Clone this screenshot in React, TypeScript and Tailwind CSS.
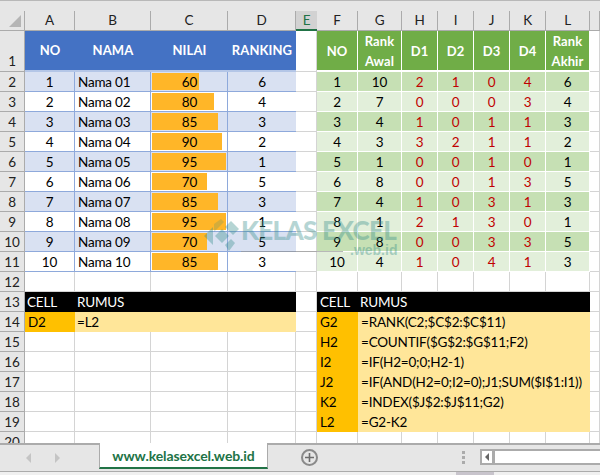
const columns = ['A', 'B', 'C', 'D', 'E', 'F', 'G', 'H', 'I', 'J', 'K', 'L', '']

const students = [
  { no: 1, name: 'Nama 01', score: 60, rank: 6 },
  { no: 2, name: 'Nama 02', score: 80, rank: 4 },
  { no: 3, name: 'Nama 03', score: 85, rank: 3 },
  { no: 4, name: 'Nama 04', score: 90, rank: 2 },
  { no: 5, name: 'Nama 05', score: 95, rank: 1 },
  { no: 6, name: 'Nama 06', score: 70, rank: 5 },
  { no: 7, name: 'Nama 07', score: 85, rank: 3 },
  { no: 8, name: 'Nama 08', score: 95, rank: 1 },
  { no: 9, name: 'Nama 09', score: 70, rank: 5 },
  { no: 10, name: 'Nama 10', score: 85, rank: 3 },
]

const ranks = [
  [1, 10, 2, 1, 0, 4, 6],
  [2, 7, 0, 0, 0, 3, 4],
  [3, 4, 1, 0, 1, 1, 3],
  [4, 3, 3, 2, 1, 1, 2],
  [5, 1, 0, 0, 1, 0, 1],
  [6, 8, 0, 0, 1, 3, 5],
  [7, 4, 1, 0, 3, 1, 3],
  [8, 1, 2, 1, 3, 0, 1],
  [9, 8, 0, 0, 3, 3, 5],
  [10, 4, 1, 0, 4, 1, 3],
]

const formulas = [
  ['G2', '=RANK(C2;$C$2:$C$11)'],
  ['H2', '=COUNTIF($G$2:$G$11;F2)'],
  ['I2', '=IF(H2=0;0;H2-1)'],
  ['J2', '=IF(AND(H2=0;I2=0);J1;SUM($I$1:I1))'],
  ['K2', '=INDEX($J$2:$J$11;G2)'],
  ['L2', '=G2-K2'],
]

const gridLine = 'border-r border-b border-[#d4d4d4]'
const blueLine = 'border-r border-b border-[#8ea9db] pt-[1px]'
const whiteLine = 'border-r border-b border-white pt-[1px]'

function RowHead({ n, className = '' }: { n: number; className?: string }) {
  return (
    <div className={`flex justify-center items-center pt-[1px] bg-[#e6e6e6] border-r border-b border-[#ababab] text-[#222] ${className}`}>
      {n}
    </div>
  )
}

function Blank({ span = 1 }: { span?: number }) {
  return (
    <>
      {Array.from({ length: span }).map((_, i) => (
        <div key={i} className={gridLine}></div>
      ))}
    </>
  )
}

function BlueHead({ children }: { children: string }) {
  return (
    <div className="flex items-center justify-center bg-[#4472c4] border-b-2 border-[#b4c6e7] font-bold text-white text-[13px] tracking-[0.1px]">
      {children}
    </div>
  )
}

function GreenHead({ children }: { children: string }) {
  return (
    <div className="flex items-center justify-center text-center leading-[20px] bg-[#70ad47] border-r border-white border-b-2 font-bold text-white text-[13px] tracking-[0.1px]">
      {children}
    </div>
  )
}

export default function App() {
  return (
    <div className="relative w-[600px] h-[475px] overflow-hidden bg-white text-[13.5px] tracking-[-0.2px] text-black font-['Lato','Open_Sans',sans-serif]">
      {/* Ribbon edge */}
      <div className="h-[11px] bg-[#e6e6e6] border-t border-[#b8b8b8]"></div>

      {/* Sheet */}
      <div className="h-[432px] overflow-hidden grid grid-cols-[25px_50px_76px_77px_68px_21px_41px_44px_36px_36px_36px_36px_44px_10px] grid-rows-[20px_41px_repeat(19,20px)]">
        {/* Column letters */}
        <div className="flex items-end justify-end bg-[#e6e6e6] border-r border-b border-[#ababab] pr-[3px] pb-[3px]">
          <div className="w-0 h-0 border-l-[12px] border-l-transparent border-b-[12px] border-b-[#b5b5b5]"></div>
        </div>
        {columns.map((c) =>
          c === 'E' ? (
            <div key={c} className="flex items-center justify-center bg-[#d2d2d2] border-b-2 border-[#217346] text-[#217346]">
              {c}
            </div>
          ) : (
            <div key={c} className="flex items-center justify-center bg-[#e6e6e6] border-r border-b border-[#ababab] text-[#222]">
              {c}
            </div>
          ),
        )}

        {/* Row 1 */}
        <RowHead n={1} className="!items-end" />
        <BlueHead>NO</BlueHead>
        <BlueHead>NAMA</BlueHead>
        <BlueHead>NILAI</BlueHead>
        <BlueHead>RANKING</BlueHead>
        <Blank />
        <GreenHead>NO</GreenHead>
        <GreenHead>Rank Awal</GreenHead>
        <GreenHead>D1</GreenHead>
        <GreenHead>D2</GreenHead>
        <GreenHead>D3</GreenHead>
        <GreenHead>D4</GreenHead>
        <GreenHead>Rank Akhir</GreenHead>
        <Blank />

        {/* Rows 2-11 */}
        {students.map((s, i) => {
          const band = i % 2 === 0
          const blueBg = band ? 'bg-[#d9e1f2]' : 'bg-white'
          const greenBg = band ? 'bg-[#c6e0b4]' : 'bg-[#e2efda]'
          return (
            <div key={s.no} className="contents">
              <RowHead n={i + 2} />
              <div className={`flex items-center justify-center ${blueBg} ${blueLine}`}>{s.no}</div>
              <div className={`flex items-center pl-[3px] ${blueBg} ${blueLine}`}>{s.name}</div>
              <div className={`grid py-[1px] pl-[1px] ${blueBg} border-r border-b border-[#8ea9db]`}>
                <div className="[grid-area:1/1] h-[17px] bg-[#ffb628]" style={{ width: Math.round(s.score * 0.78) }}></div>
                <div className="[grid-area:1/1] flex items-center justify-center h-[17px] pt-[1px]">{s.score}</div>
              </div>
              <div className={`flex items-center justify-center pt-[1px] ${blueBg} border-b border-[#8ea9db]`}>{s.rank}</div>
              <Blank />
              {ranks[i].map((v, j) => (
                <div
                  key={j}
                  className={`flex items-center justify-center ${greenBg} ${whiteLine} ${j >= 2 && j <= 5 ? 'text-[#c00000]' : ''}`}
                >
                  {v}
                </div>
              ))}
              <Blank />
            </div>
          )
        })}

        {/* Row 12 */}
        <RowHead n={12} />
        <Blank span={13} />

        {/* Row 13 */}
        <RowHead n={13} />
        <div className="flex items-center pl-[2px] pt-[1px] bg-black text-white">CELL</div>
        <div className="col-span-3 flex items-center pl-[2px] pt-[1px] bg-black text-white">RUMUS</div>
        <Blank />
        <div className="flex items-center pl-[3px] pt-[1px] bg-black text-white">CELL</div>
        <div className="col-span-6 flex items-center pl-[2px] pt-[1px] bg-black text-white">RUMUS</div>
        <Blank />

        {/* Row 14-19 */}
        {formulas.map(([cell, formula], i) => (
          <div key={cell} className="contents">
            <RowHead n={14 + i} />
            {i === 0 ? (
              <>
                <div className="flex items-center pl-[3px] pt-[1px] bg-[#ffc000]">D2</div>
                <div className="col-span-3 flex items-center pl-[2px] pt-[1px] bg-[#ffe699]">=L2</div>
              </>
            ) : (
              <Blank span={4} />
            )}
            <Blank />
            <div className="flex items-center pl-[3px] pt-[1px] bg-[#ffc000]">{cell}</div>
            <div className="col-span-6 flex items-center pl-[3px] pt-[1px] bg-[#ffe699] whitespace-nowrap">{formula}</div>
            <Blank />
          </div>
        ))}

        {/* Row 20 */}
        <RowHead n={20} />
        <Blank span={13} />
      </div>

      {/* Sheet tabs */}
      <div className="h-[28px] flex items-stretch bg-[#e6e6e6] border-t-2 border-[#ababab]">
        <div className="w-[99px] flex items-center">
          <div className="ml-[26px] w-0 h-0 border-y-[5px] border-y-transparent border-r-[5px] border-r-[#c4c4c4]"></div>
          <div className="ml-[24px] w-0 h-0 border-y-[5px] border-y-transparent border-l-[5px] border-l-[#c4c4c4]"></div>
        </div>
        <div className="w-[169px] -mt-[2px] mb-[2px] flex items-center justify-center bg-white border-x border-[#ababab] border-b-[2px] border-b-[#217346] font-bold text-[14px] tracking-[-0.1px] text-[#217346]">
          www.kelasexcel.web.id
        </div>
        <div className="ml-[33px] self-center mb-[2px] w-[17px] h-[17px] rounded-full border-2 border-[#8a8a8a] flex items-center justify-center text-[#6e6e6e]">
          <svg width="9" height="9" viewBox="0 0 9 9">
            <path d="M4.5 0v9M0 4.5h9" stroke="currentColor" strokeWidth="1.6" />
          </svg>
        </div>
        <div className="ml-[144px] self-center mb-[2px] flex flex-col gap-[2px]">
          <div className="w-[3px] h-[3px] bg-[#ababab]"></div>
          <div className="w-[3px] h-[3px] bg-[#ababab]"></div>
          <div className="w-[3px] h-[3px] bg-[#ababab]"></div>
        </div>
        <div className="ml-[15px] self-center mb-[2px] flex-1 h-[16px] flex items-center bg-white border-y-2 border-l-2 border-[#ababab]">
          <div className="w-[13px] h-full flex items-center justify-center border-r-[3px] border-[#ababab]">
            <div className="w-0 h-0 border-y-[4px] border-y-transparent border-r-[4px] border-r-[#666]"></div>
          </div>
        </div>
      </div>

      {/* Status bar edge */}
      <div className="h-[4px] bg-[#f0f0f0] border-t border-[#ababab] pl-[456px]">
        <div className="w-[38px] h-[3px] bg-[#c8c4cc]"></div>
      </div>

      {/* Watermark floats over the sheet */}
      <div className="absolute left-[204px] top-[218px] w-[200px] h-[40px] pointer-events-none opacity-35 text-[#2f8a86]">
        <svg className="absolute left-0 top-[1px]" width="36" height="34" viewBox="0 0 36 34" fill="currentColor">
          <path d="M0 17L9 8v18z" />
          <path d="M10 5l7-5 3 3-10 10z" opacity="0.6" />
          <path d="M11 17l7-7 7 7-7 7z" />
          <path d="M21 8l6-6 8 8-6 6z" />
          <path d="M21 26l6-6 4 4-6 8z" />
        </svg>
        <div className="absolute left-[37px] -top-[4px] whitespace-nowrap font-black text-[26px] leading-[32px] tracking-[-0.7px]">
          KELAS EXCEL
        </div>
        <div className="absolute left-[146px] top-[22px] whitespace-nowrap font-bold text-[14px] tracking-normal font-['Liberation_Sans',sans-serif]">
          .web.id
        </div>
      </div>
      <div className="absolute left-[241px] top-[251px] w-[102px] h-[1px] pointer-events-none bg-[#9a9a9a] opacity-70"></div>
    </div>
  )
}
